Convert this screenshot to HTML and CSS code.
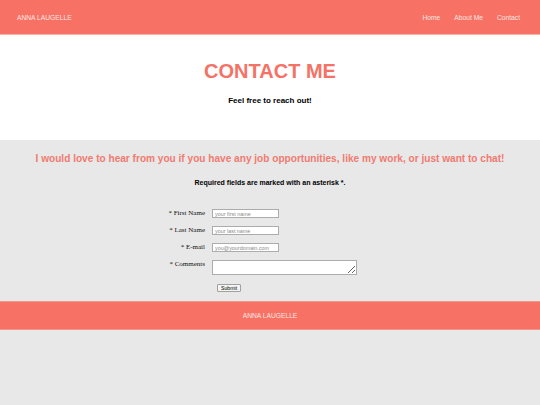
FILE: index.html
```html
<!DOCTYPE html>
<html lang="en">
<head>
<meta charset="utf-8">
<title>Contact - Anna Laugelle</title>
<link rel="stylesheet" href="styles.css">
</head>
<body>
<header class="topbar">
  <div class="brand">ANNA LAUGELLE</div>
  <nav class="nav">
    <a href="#">Home</a>
    <a href="#">About Me</a>
    <a href="#">Contact</a>
  </nav>
</header>
<section class="hero">
  <h1 class="hero-title">CONTACT ME</h1>
  <p class="hero-sub">Feel free to reach out!</p>
</section>
<section class="contact">
  <h2 class="contact-title">I would love to hear from you if you have any job opportunities, like my work, or just want to chat!</h2>
  <p class="required">Required fields are marked with an asterisk *.</p>
  <form class="form">
    <label class="label" for="fn">* First Name</label>
    <input class="field" id="fn" type="text" placeholder="your first name">
    <label class="label" for="ln">* Last Name</label>
    <input class="field" id="ln" type="text" placeholder="your last name">
    <label class="label" for="em">* E-mail</label>
    <input class="field" id="em" type="email" placeholder="you@yourdomain.com">
    <label class="label" for="cm">* Comments</label>
    <textarea class="area" id="cm"></textarea>
    <span></span>
    <button class="submit" type="button">Submit</button>
  </form>
</section>
<footer class="footer">ANNA LAUGELLE</footer>
</body>
</html>
```
FILE: styles.css
```css
html, body {
  margin: 0;
  padding: 0;
}
body {
  background: #e8e8e8;
  font-family: "Liberation Sans", Arial, sans-serif;
  color: #000;
}
.topbar {
  height: 34px;
  background: #f77264;
  border-bottom: 1px solid #fbb4ac;
  display: flex;
  align-items: center;
  justify-content: space-between;
  padding: 0 20px 0 17px;
  color: #fde6e3;
  font-size: 6.7px;
}
.nav {
  display: flex;
  gap: 14px;
}
.nav a {
  color: #fde6e3;
  text-decoration: none;
}
.hero {
  background: #fff;
  height: 105px;
  padding-top: 25px;
  box-sizing: border-box;
  text-align: center;
}
.hero-title {
  margin: 0;
  font-size: 20px;
  line-height: 22px;
  font-weight: bold;
  color: #f47266;
}
.hero-sub {
  margin: 14px 0 0;
  font-size: 8px;
  line-height: 10px;
  font-weight: bold;
}
.contact {
  padding: 12px 0 9px;
  text-align: center;
}
.contact-title {
  margin: 0;
  font-size: 10.1px;
  line-height: 14px;
  font-weight: bold;
  color: #f07b70;
}
.required {
  margin: 13px 0 0;
  font-size: 7px;
  line-height: 8px;
  font-weight: bold;
}
.form {
  margin-top: 22px;
  display: grid;
  grid-template-columns: 205px 1fr;
  column-gap: 7px;
  row-gap: 8px;
  text-align: left;
}
.label {
  text-align: right;
  font-family: "Liberation Serif", "Times New Roman", serif;
  font-size: 7px;
  line-height: 9px;
  color: #111;
}
.field {
  width: 67px;
  height: 9px;
  box-sizing: border-box;
  border: 1px solid #acacac;
  background: #fff;
  padding: 0 2px;
  margin: 0;
  font-family: "Liberation Sans", Arial, sans-serif;
  font-size: 5.4px;
  outline: none;
}
.field::placeholder {
  color: #8a8a8a;
}
.area {
  width: 145px;
  height: 15px;
  box-sizing: border-box;
  border: 1px solid #acacac;
  background: #fff;
  margin: 0;
  padding: 1px;
  font-size: 5.4px;
  display: block;
  outline: none;
}
.submit {
  justify-self: start;
  margin: 1px 0 0 5px;
  width: 24px;
  height: 8px;
  padding: 0;
  box-sizing: border-box;
  border: 1px solid #a0a0a0;
  border-radius: 1px;
  background: #f4f4f4;
  font-family: "Liberation Sans", Arial, sans-serif;
  font-size: 5.2px;
  line-height: 6px;
  color: #000;
}
.footer {
  height: 29px;
  box-sizing: border-box;
  background: #f77264;
  border-top: 1px solid #f0958c;
  border-bottom: 1px solid #f0958c;
  display: flex;
  align-items: center;
  justify-content: center;
  color: #fde6e3;
  font-size: 6.7px;
}
```
